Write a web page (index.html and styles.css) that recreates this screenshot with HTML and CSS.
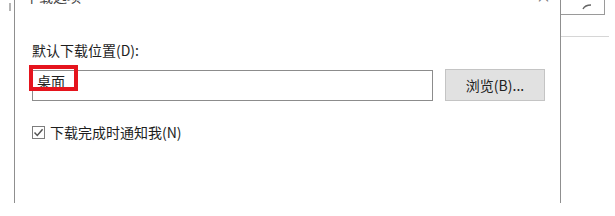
FILE: index.html
```html
<!DOCTYPE html>
<html lang="zh-CN">
<head>
  <meta charset="UTF-8" />
  <title>下载选项</title>
  <link rel="stylesheet" href="styles.css">
</head>
<body>
  <div class="edge-left"><span class="edge-mark"></span></div>
  <div class="dialog">
    <div class="title-bar">
      <span class="title">下载选项</span>
      <span class="close">×</span>
    </div>
    <div class="content">
      <div class="field-label">默认下载位置(D):</div>
      <div class="path-row">
        <div class="path-input">
          <span class="path-text">桌面</span>
          <span class="highlight"></span>
        </div>
        <button class="browse-btn">浏览(B)...</button>
      </div>
      <label class="notify-row">
        <span class="check-box">
          <svg width="11" height="11" viewBox="0 0 11 11"><path d="M1.5 5.6 L4.3 8.5 L9.6 2.2" fill="none" stroke="#555" stroke-width="1.5"/></svg>
        </span>
        <span class="notify-text">下载完成时通知我(N)</span>
      </label>
    </div>
  </div>
  <div class="side-right">
    <div class="search-box">
      <svg width="10" height="6" viewBox="0 0 10 6"><path d="M1 5 Q3 1 9 1" fill="none" stroke="#666" stroke-width="1.4"/></svg>
    </div>
    <div class="side-line"></div>
  </div>
</body>
</html>
```

FILE: styles.css
```css
body {
  margin: 0;
  width: 615px;
  height: 216px;
  background: #fff;
  font-family: "Noto Sans CJK SC", "Noto Sans", sans-serif;
  color: #1e1e1e;
  display: flex;
  align-items: flex-start;
  overflow: hidden;
}
.edge-left {
  width: 14px;
  height: 203px;
  position: relative;
}
.edge-mark {
  position: absolute;
  left: 9px;
  top: 3px;
  width: 2px;
  height: 8px;
  background: #b5b5b5;
}
.dialog {
  width: 545px;
  height: 203px;
  border-left: 1px solid #8f8f8f;
  border-right: 1px solid #8f8f8f;
}
.title-bar {
  display: flex;
  justify-content: space-between;
  height: 20px;
  margin-top: -14px;
  padding: 0 9px 0 10px;
  font-size: 14px;
  line-height: 20px;
  color: #444;
}
.close {
  font-size: 15px;
  color: #777;
}
.content {
  padding-left: 17px;
  margin-top: 2px;
}
.field-label {
  margin-top: 34px;
  font-size: 14px;
  line-height: 20px;
}
.path-row {
  display: flex;
  align-items: flex-end;
  gap: 12px;
  margin-top: 9px;
}
.path-input {
  position: relative;
  width: 401px;
  height: 31px;
  box-sizing: border-box;
  border: 1px solid #8c8c8c;
  padding-left: 4px;
  font-size: 14px;
  line-height: 21px;
}
.highlight {
  position: absolute;
  left: -4px;
  top: -6px;
  width: 49px;
  height: 26px;
  box-sizing: border-box;
  border: 4px solid #e5141d;
}
.browse-btn {
  width: 100px;
  height: 32px;
  box-sizing: border-box;
  background: #e1e1e1;
  border: 1px solid #c4c4c4;
  font-family: "Noto Sans CJK SC", "Noto Sans", sans-serif;
  font-size: 14px;
  color: #222;
  padding: 0;
}
.notify-row {
  display: flex;
  align-items: center;
  gap: 5px;
  margin-top: 21px;
  height: 20px;
  font-size: 14px;
}
.check-box {
  width: 13px;
  height: 13px;
  box-sizing: border-box;
  border: 1px solid #7d7d7d;
  display: flex;
  align-items: center;
  justify-content: center;
}
.side-right {
  flex: 1;
  height: 203px;
}
.search-box {
  width: 44px;
  height: 15px;
  box-sizing: border-box;
  border: 1px solid #9a9a9a;
  border-top: none;
  border-left: none;
  display: flex;
  align-items: center;
  justify-content: center;
  padding-left: 8px;
}
.side-line {
  margin-top: 21px;
  width: 48px;
  height: 1px;
  background: #d6d6d6;
}
```
